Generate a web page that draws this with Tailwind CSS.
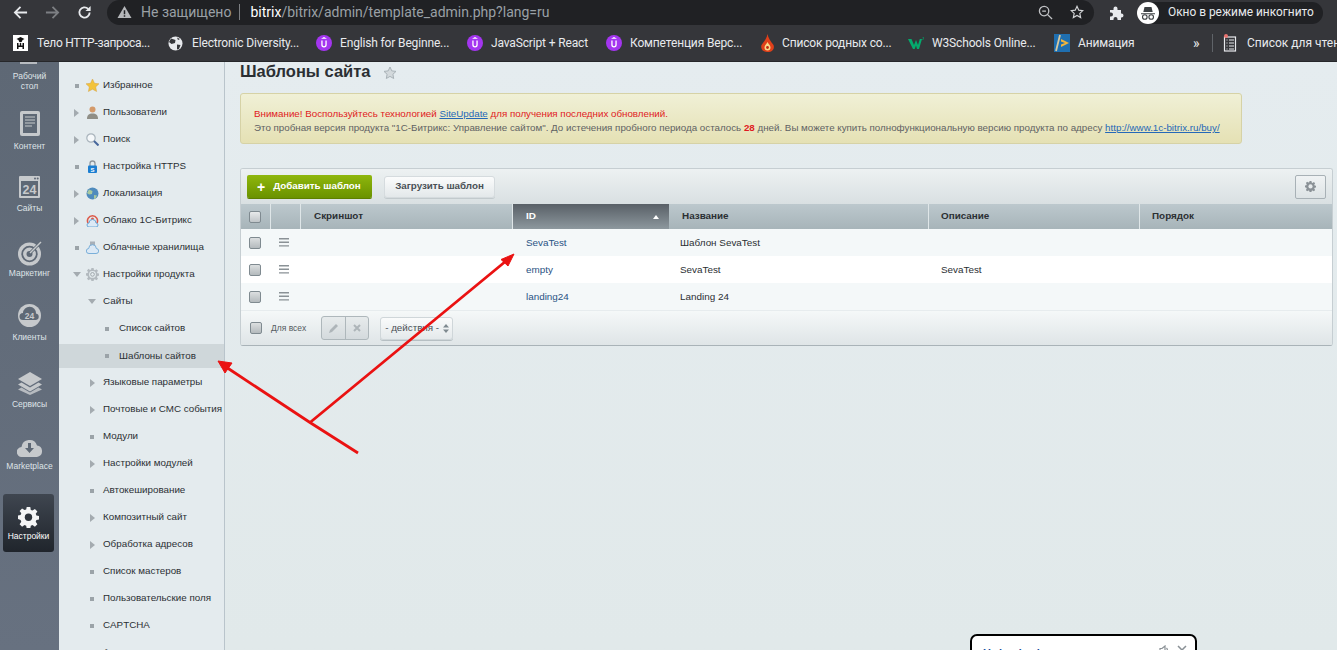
<!DOCTYPE html>
<html lang="ru"><head><meta charset="utf-8"><script src="https://cdn.jsdelivr.net/npm/@tailwindcss/browser@4"></script></head>
<body class="w-[1337px] h-[650px] overflow-hidden relative bg-[#e4ebee] font-['Liberation_Sans',Arial,sans-serif]">
<div class="flex flex-col h-[650px]">
<!-- browser chrome -->
<header class="h-[62px] shrink-0 bg-[#35363a] text-[#e8eaed] font-['Roboto',sans-serif] border-b border-[#26272a]">
  <div class="h-[25px] flex items-center relative">
    <div class="w-[107px] shrink-0 flex items-center pl-[13px] gap-[17px]">
      <svg class="w-[15px] h-[15px]" viewBox="0 0 16 16" fill="none" stroke="#e8eaed" stroke-width="1.9"><path d="M15 8H2M8 2 2 8l6 6"/></svg>
      <svg class="w-[15px] h-[15px]" viewBox="0 0 16 16" fill="none" stroke="#7d7f83" stroke-width="1.9"><path d="M1 8h13M8 2l6 6-6 6"/></svg>
      <svg class="w-[15px] h-[15px]" viewBox="0 0 16 16" fill="none" stroke="#e8eaed" stroke-width="2"><path d="M13.500 8a5.500 5.500 0 1 1-1.600-3.900"/><path d="M14.500 1v5.500H9Z" fill="#e8eaed" stroke="none"/></svg>
    </div>
    <div class="w-[987px] h-[25px] -mt-[1px] rounded-r-[13px] rounded-l-[13px] bg-[#202124] flex items-center pl-[10px] text-[14px]">
      <svg class="w-[15px] h-[14px] shrink-0" viewBox="0 0 16 15"><path d="M8 1 15.500 14H.5Z" fill="#b5b7ba"/><path d="M7.200 5.500h1.600V10H7.200zM7.200 11h1.600v1.500H7.200z" fill="#202124"/></svg>
      <span class="ml-[9px] text-[#9aa0a6] whitespace-nowrap">Не защищено</span>
      <span class="ml-[8px] mr-[10px] w-px h-[16px] bg-[#7d7f83]"></span>
      <span class="text-white">bitrix</span><span class="text-[#9aa0a6]">/bitrix/admin/template_admin.php?lang=ru</span>
      <span class="flex-1"></span>
      <svg class="w-[15px] h-[15px] mr-[17px]" viewBox="0 0 16 16" fill="none" stroke="#c0c2c5" stroke-width="1.400"><circle cx="6.500" cy="6.500" r="5"/><path d="M10 10l5 5M4.500 6.500h4"/></svg>
      <svg class="w-[14px] h-[14px] mr-[10px]" viewBox="0 0 16 16" fill="none" stroke="#d4d6d8" stroke-width="1.300"><path d="M8 1.500l2 4.400 4.700.5-3.500 3.200 1 4.700L8 11.900l-4.200 2.400 1-4.700L1.300 6.400 6 5.900Z"/></svg>
    </div>
    <svg class="w-[16px] h-[16px] ml-[15px]" viewBox="0 0 16 16" fill="#e8eaed"><path d="M1 5h3.500V3.500a2 2 0 0 1 4 0V5H12v3.500h.5a2 2 0 0 1 0 4H12V15H8.500v-1a2 2 0 0 0-4 0v1H1v-3.500h1a2 2 0 0 0 0-4H1Z"/></svg>
    <div class="ml-[12px] h-[22px] w-[186px] bg-[#202124] rounded-full flex items-center text-[11.900px] text-[#e8eaed]">
      <svg class="w-[22px] h-[22px] shrink-0" viewBox="0 0 22 22"><circle cx="11" cy="11" r="11" fill="#fff"/><path d="M4 11.200h14v1H4zM7.500 5h7l1.200 5H6.300Z" fill="#3c4043"/><circle cx="7.800" cy="15" r="2.300" fill="none" stroke="#3c4043" stroke-width="1.100"/><circle cx="14.200" cy="15" r="2.300" fill="none" stroke="#3c4043" stroke-width="1.100"/></svg>
      <span class="ml-[9px] whitespace-nowrap">Окно в режиме инкогнито</span>
    </div>
  </div>
  <div class="h-[36px] flex items-center overflow-hidden text-[12px] tracking-[-0.15px] whitespace-nowrap">
    <div class="flex items-center shrink-0 w-[168px] pl-[13px]">
      <svg class="w-[15px] h-[16px] shrink-0" viewBox="0 0 15 16"><rect width="15" height="16" fill="#fff"/><path d="M3.500 4 7.500 2l4 2-4 2Z" fill="#111"/><circle cx="7.500" cy="5.500" r="1.800" fill="#111"/><path d="M4 8h1.500v6H4zM9.500 8H11v6H9.500zM5.500 10.500h4V12h-4zM6.800 8h1.400v2.500H6.800z" fill="#111"/></svg>
      <span class="ml-[9px] tracking-[-0.3px]">Тело HTTP-запроса...</span>
    </div>
    <div class="flex items-center shrink-0 w-[148px]">
      <svg class="w-[15px] h-[15px] shrink-0" viewBox="0 0 15 15"><circle cx="7.500" cy="7.500" r="7" fill="#e8eaed"/><path d="M3 2.500 7.500 4 7 7 3.500 8 1 6ZM9 8.500l3.500.5-1.500 4-2 .5ZM9 1.500l3 1.500-2 1Z" fill="#35363a"/></svg>
      <span class="ml-[9px]">Electronic Diversity...</span>
    </div>
    <div class="flex items-center shrink-0 w-[151px]">
      <svg class="w-[16px] h-[16px] shrink-0" viewBox="0 0 16 16"><circle cx="8" cy="8" r="8" fill="#a435f0"/><path d="M8 2 11 3.700H5Z" fill="#fff"/><path d="M5.300 5.500h1.300v4.300a1.400 1.400 0 0 0 2.800 0V5.500h1.300v4.300a2.700 2.700 0 0 1-5.400 0Z" fill="#fff"/></svg>
      <span class="ml-[8px]">English for Beginne...</span>
    </div>
    <div class="flex items-center shrink-0 w-[139px]">
      <svg class="w-[16px] h-[16px] shrink-0" viewBox="0 0 16 16"><circle cx="8" cy="8" r="8" fill="#a435f0"/><path d="M8 2 11 3.700H5Z" fill="#fff"/><path d="M5.300 5.500h1.300v4.300a1.400 1.400 0 0 0 2.800 0V5.500h1.300v4.300a2.700 2.700 0 0 1-5.400 0Z" fill="#fff"/></svg>
      <span class="ml-[8px]">JavaScript + React</span>
    </div>
    <div class="flex items-center shrink-0 w-[154px]">
      <svg class="w-[16px] h-[16px] shrink-0" viewBox="0 0 16 16"><circle cx="8" cy="8" r="8" fill="#a435f0"/><path d="M8 2 11 3.700H5Z" fill="#fff"/><path d="M5.300 5.500h1.300v4.300a1.400 1.400 0 0 0 2.800 0V5.500h1.300v4.300a2.700 2.700 0 0 1-5.400 0Z" fill="#fff"/></svg>
      <span class="ml-[8px]">Компетенция Верс...</span>
    </div>
    <div class="flex items-center shrink-0 w-[148px]">
      <svg class="w-[15px] h-[19px] shrink-0" viewBox="0 0 15 19"><path d="M7.500 0c.6 4 3 7 6 11 1.200 3-.5 7-6 7s-7-4-6-7c3-4 5.400-7 6-11Z" fill="#e0401a"/><path d="M7.500 8c1 2 3 3.500 3 5.500a3 3 0 0 1-6 0c0-2 2-3.500 3-5.500Z" fill="#f8d98a"/><circle cx="7.500" cy="13.500" r="1.400" fill="#c12a12"/></svg>
      <span class="ml-[7px]">Список родных со...</span>
    </div>
    <div class="flex items-center shrink-0 w-[146px]">
      <span class="relative w-[16px] h-[12px] shrink-0"><svg class="w-[16px] h-[12px]" viewBox="0 0 16 12"><path d="M0 2h3.500L6 8l2-5 2 5 1.800-6H14l-3 10H9L8 8.500 6.700 12H5Z" fill="#04aa6d"/><path d="M14 0h1.600v.6l-.6.5h.6v1.200H14" fill="none" stroke="#04aa6d" stroke-width=".5"/></svg></span>
      <span class="ml-[8px]">W3Schools Online...</span>
    </div>
    <div class="flex items-center shrink-0 w-[139px]">
      <svg class="w-[16px] h-[18px] shrink-0" viewBox="0 0 16 18"><rect width="16" height="18" fill="#1f6fb0"/><path d="M6 1 2 17" stroke="#d8c9a0" stroke-width="1.800"/><path d="M7 5l8 4-8 4v-2.500L11 9 7 7.500Z" fill="#f1b53c"/></svg>
      <span class="ml-[8px]">Анимация</span>
    </div>
    <span class="text-[14px] shrink-0 w-[19px] tracking-normal">»</span>
    <span class="w-px h-[18px] shrink-0 bg-[#5f6368]"></span>
    <svg class="w-[14px] h-[18px] ml-[10px] shrink-0" viewBox="0 0 14 18" fill="none" stroke="#e8eaed" stroke-width="1.200"><rect x="1.500" y="3" width="11" height="14"/><path d="M3.500 6h1M6 6h5M3.500 9h1M6 9h5M3.500 12h1M6 12h5M3.500 15h1M6 15h5"/><circle cx="3" cy="2" r="2" fill="#e8736f" stroke="none"/></svg>
    <span class="ml-[10px] shrink-0 tracking-normal">Список для чтения</span>
  </div>
</header>
<div class="flex flex-1 min-h-0">
<!-- rail -->
<nav class="w-[59px] shrink-0 overflow-hidden bg-gradient-to-b from-[#5e6875] to-[#677180] text-[#dfe3e7] text-[8.500px] leading-[11px] text-center">
  <div class="h-[33px] pt-[9px] leading-[10px] relative"><span class="absolute left-[20px] top-0 w-[17px] h-[2px] bg-[#b7bbc0]"></span>Рабочий<br>стол</div>
  <div class="h-[66px] pt-[16px] flex flex-col items-center">
    <svg class="w-[20px] h-[25px]" viewBox="0 0 20 25"><rect width="20" height="25" rx="2" fill="#c6c9cc"/><rect x="3" y="3" width="14" height="19" fill="#5e6875"/><path d="M5 6h10M5 9h10M5 12h10M5 15h7" stroke="#c6c9cc" stroke-width="1.200"/></svg>
    <span class="mt-[5px]">Контент</span>
  </div>
  <div class="h-[62px] pt-[15px] flex flex-col items-center">
    <svg class="w-[21px] h-[22px]" viewBox="0 0 21 22"><rect width="21" height="22" rx="1" fill="#c6c9cc"/><rect x="2" y="5" width="17" height="15" fill="#5e6875"/><circle cx="16" cy="2.500" r="1" fill="#5e6875"/><circle cx="18.700" cy="2.500" r="1" fill="#5e6875"/><text x="10.500" y="17.500" text-anchor="middle" font-size="12.500" font-weight="700" fill="#c6c9cc" font-family="Liberation Sans">24</text></svg>
    <span class="mt-[5px]">Сайты</span>
  </div>
  <div class="h-[65px] pt-[17px] flex flex-col items-center">
    <svg class="w-[26px] h-[26px]" viewBox="0 0 26 26" fill="none"><circle cx="12.500" cy="14" r="11.500" fill="#c6c9cc"/><circle cx="12.500" cy="14" r="7.300" stroke="#5e6875" stroke-width="1.800"/><circle cx="12.500" cy="14" r="3" fill="#5e6875"/><path d="M13 13 24 2" stroke="#5e6875" stroke-width="3"/><path d="M13 13 24 2" stroke="#c6c9cc" stroke-width="1.400"/></svg>
    <span class="mt-[2px]">Маркетинг</span>
  </div>
  <div class="h-[64px] pt-[16px] flex flex-col items-center">
    <svg class="w-[23px] h-[23px]" viewBox="0 0 23 23"><circle cx="11.500" cy="11.500" r="11.500" fill="#c6c9cc"/><path d="M5 16a3.500 3.500 0 0 1 0-7 6.500 6.500 0 0 1 13 .5 3.300 3.300 0 0 1 0 6.500Z" fill="#5e6875"/><text x="11.500" y="15" text-anchor="middle" font-size="8.500" font-weight="700" fill="#c6c9cc" font-family="Liberation Sans">24</text></svg>
    <span class="mt-[5px]">Клиенты</span>
  </div>
  <div class="h-[67px] pt-[20px] flex flex-col items-center">
    <svg class="w-[24px] h-[23px]" viewBox="0 0 24 23" fill="#c6c9cc"><path d="M12 0 24 7 12 14 0 7Z"/><path d="M3.500 10.500 12 15.500l8.500-5L24 12.500 12 19.500 0 12.500Z"/><path d="M3.500 15.500 12 20.500l8.500-5L24 17.500 12 23 0 17.500Z" opacity=".85"/></svg>
    <span class="mt-[4px]">Сервисы</span>
  </div>
  <div class="h-[62px] pt-[18px] flex flex-col items-center">
    <svg class="w-[25px] h-[20px]" viewBox="0 0 25 20"><path d="M5 20a5 5 0 0 1-.5-10A8 8 0 0 1 20 8.500 5.800 5.800 0 0 1 20 20Z" fill="#c6c9cc"/><path d="M11 6h3v5h3l-4.500 5L8 11h3Z" fill="#5e6875"/></svg>
    <span class="mt-[4px]">Marketplace</span>
  </div>
  <div class="mx-[3px] mt-[13px] h-[58px] w-[51px] rounded-[3px] bg-gradient-to-b from-[#3f4650] to-[#20252c] text-white flex flex-col items-center pt-[13px]">
    <svg class="w-[21px] h-[21px]" viewBox="0 0 21 21"><path fill="#f4f5f6" d="M8.700 0h3.600l.5 2.900 1.700.7 2.400-1.700 2.500 2.500-1.700 2.400.7 1.700 2.600.5v3.600l-2.600.5-.7 1.700 1.700 2.400-2.500 2.500-2.400-1.700-1.700.7-.5 2.800H8.700l-.5-2.800-1.700-.7-2.400 1.700-2.500-2.500 1.700-2.400-.7-1.700L0 12.100V8.500l2.600-.5.7-1.700L1.600 3.900 4.100 1.400l2.400 1.700 1.700-.7Z"/><circle cx="10.500" cy="10.300" r="3.700" fill="#2e343c"/></svg>
    <span class="mt-[3px]">Настройки</span>
  </div>
</nav>
<!-- menu -->
<aside class="w-[166px] shrink-0 overflow-hidden border-r border-[#b9c4cb] bg-[#e4ebee] text-[9.800px] text-[#2b2f33] pt-[10px]">
  <div class="h-[27px] flex items-center"><span class="w-[4px] h-[4px] bg-[#9ba3a8] ml-[16px] mr-[7px]"></span><svg class="w-[13px] h-[13px] mr-[4px]" viewBox="0 0 13 13"><path d="M6.500 0 8.500 4.300l4.500.5-3.300 3.100.9 4.600-4.100-2.300-4.100 2.300.9-4.600L0 4.800l4.500-.5Z" fill="#f3c33b" stroke="#d5a347" stroke-width=".5"/></svg>Избранное</div>
  <div class="h-[27px] flex items-center"><span class="w-0 h-0 border-y-[4px] border-y-transparent border-l-[5px] border-l-[#a4abb0] ml-[15px] mr-[7px]"></span><svg class="w-[13px] h-[13px] mr-[4px]" viewBox="0 0 13 13"><circle cx="6.500" cy="3.500" r="3" fill="#d49a6a"/><path d="M1 13c0-4 2-5.500 5.500-5.500S12 9 12 13Z" fill="#8f8e86"/></svg>Пользователи</div>
  <div class="h-[27px] flex items-center"><span class="w-0 h-0 border-y-[4px] border-y-transparent border-l-[5px] border-l-[#a4abb0] ml-[15px] mr-[7px]"></span><svg class="w-[13px] h-[13px] mr-[4px]" viewBox="0 0 13 13"><circle cx="5" cy="5" r="4.200" fill="#f5f8fa" stroke="#a9b4bc" stroke-width="1.200"/><path d="M8 8l4.500 4.500" stroke="#47679c" stroke-width="2"/></svg>Поиск</div>
  <div class="h-[27px] flex items-center"><span class="w-[4px] h-[4px] bg-[#9ba3a8] ml-[16px] mr-[7px]"></span><svg class="w-[13px] h-[13px] mr-[4px]" viewBox="0 0 13 13"><path d="M4 6V3.500a2.500 2.500 0 0 1 5 0V6" fill="none" stroke="#8f979d" stroke-width="1.300"/><rect x="2" y="5.500" width="9" height="7.500" rx="1" fill="#1b7ed1"/><text x="6.500" y="11.500" text-anchor="middle" font-size="6" font-weight="700" fill="#fff" font-family="Liberation Sans">S</text></svg>Настройка HTTPS</div>
  <div class="h-[27px] flex items-center"><span class="w-0 h-0 border-y-[4px] border-y-transparent border-l-[5px] border-l-[#a4abb0] ml-[15px] mr-[7px]"></span><svg class="w-[13px] h-[13px] mr-[4px]" viewBox="0 0 13 13"><circle cx="6.500" cy="6.500" r="6" fill="#4f8bbd"/><path d="M3 2.500 6.500 4 6 7 3 7.500 1 6ZM8 8l3 .5-1.500 3-1.500.5Z" fill="#a9c99f"/></svg>Локализация</div>
  <div class="h-[27px] flex items-center"><span class="w-0 h-0 border-y-[4px] border-y-transparent border-l-[5px] border-l-[#a4abb0] ml-[15px] mr-[7px]"></span><svg class="w-[13px] h-[13px] mr-[4px]" viewBox="0 0 13 13"><path d="M2 9a5 5 0 1 1 9 0" fill="none" stroke="#dc5a4a" stroke-width="1.600"/><circle cx="6.500" cy="5" r="1.500" fill="#dc5a4a"/><path d="M3 13a2 2 0 0 1 0-4 3.500 3.500 0 0 1 7 0 2 2 0 0 1 0 4Z" fill="#dce9f5" stroke="#5f9fd3" stroke-width=".9"/></svg>Облако 1С-Битрикс</div>
  <div class="h-[27px] flex items-center"><span class="w-[4px] h-[4px] bg-[#9ba3a8] ml-[16px] mr-[7px]"></span><svg class="w-[13px] h-[13px] mr-[4px]" viewBox="0 0 13 13"><rect x="4" y="0.500" width="5" height="6" fill="#a8b0b8"/><path d="M3 12.500a2.500 2.500 0 0 1-.3-5 3.800 3.800 0 0 1 7.600 0 2.500 2.500 0 0 1-.3 5Z" fill="#dce9f5" stroke="#6ea8d6" stroke-width=".9"/></svg>Облачные хранилища</div>
  <div class="h-[27px] flex items-center"><span class="w-0 h-0 border-x-[4px] border-x-transparent border-t-[5px] border-t-[#a4abb0] ml-[14px] mr-[5px]"></span><svg class="w-[13px] h-[13px] mr-[4px]" viewBox="0 0 21 21"><path fill="#b3babf" d="M8.700 0h3.600l.5 2.900 1.700.7 2.400-1.700 2.500 2.500-1.700 2.400.7 1.700 2.600.5v3.600l-2.600.5-.7 1.700 1.700 2.400-2.500 2.500-2.400-1.700-1.700.7-.5 2.800H8.700l-.5-2.800-1.700-.7-2.400 1.700-2.500-2.500 1.700-2.400-.7-1.700L0 12.100V8.500l2.600-.5.7-1.700L1.600 3.900 4.100 1.400l2.400 1.700 1.700-.7Z"/><circle cx="10.500" cy="10.300" r="5.500" fill="#e4ebee"/><circle cx="10.500" cy="10.300" r="3" fill="none" stroke="#9ba3a8" stroke-width="1.500"/></svg>Настройки продукта</div>
  <div class="h-[27px] flex items-center"><span class="w-0 h-0 border-x-[4px] border-x-transparent border-t-[5px] border-t-[#a4abb0] ml-[29px] mr-[7px]"></span>Сайты</div>
  <div class="h-[27px] flex items-center"><span class="w-[4px] h-[4px] bg-[#9ba3a8] ml-[46px] mr-[10px]"></span>Список сайтов</div>
  <div class="h-[24px] mt-[2px] mb-[1px] flex items-center bg-[#cfd7da]"><span class="w-[4px] h-[4px] bg-[#9ba3a8] ml-[46px] mr-[10px]"></span>Шаблоны сайтов</div>
  <div class="h-[27px] flex items-center"><span class="w-0 h-0 border-y-[4px] border-y-transparent border-l-[5px] border-l-[#a4abb0] ml-[31px] mr-[8px]"></span>Языковые параметры</div>
  <div class="h-[27px] flex items-center whitespace-nowrap"><span class="w-0 h-0 border-y-[4px] border-y-transparent border-l-[5px] border-l-[#a4abb0] ml-[31px] mr-[8px]"></span>Почтовые и СМС события</div>
  <div class="h-[27px] flex items-center"><span class="w-[4px] h-[4px] bg-[#9ba3a8] ml-[31px] mr-[9px]"></span>Модули</div>
  <div class="h-[27px] flex items-center"><span class="w-0 h-0 border-y-[4px] border-y-transparent border-l-[5px] border-l-[#a4abb0] ml-[31px] mr-[8px]"></span>Настройки модулей</div>
  <div class="h-[27px] flex items-center"><span class="w-[4px] h-[4px] bg-[#9ba3a8] ml-[31px] mr-[9px]"></span>Автокеширование</div>
  <div class="h-[27px] flex items-center"><span class="w-0 h-0 border-y-[4px] border-y-transparent border-l-[5px] border-l-[#a4abb0] ml-[31px] mr-[8px]"></span>Композитный сайт</div>
  <div class="h-[27px] flex items-center"><span class="w-0 h-0 border-y-[4px] border-y-transparent border-l-[5px] border-l-[#a4abb0] ml-[31px] mr-[8px]"></span>Обработка адресов</div>
  <div class="h-[27px] flex items-center"><span class="w-[4px] h-[4px] bg-[#9ba3a8] ml-[31px] mr-[9px]"></span>Список мастеров</div>
  <div class="h-[27px] flex items-center"><span class="w-[4px] h-[4px] bg-[#9ba3a8] ml-[31px] mr-[9px]"></span>Пользовательские поля</div>
  <div class="h-[27px] flex items-center"><span class="w-[4px] h-[4px] bg-[#9ba3a8] ml-[31px] mr-[9px]"></span>CAPTCHA</div>
  <div class="h-[27px] flex items-center"><span class="w-[4px] h-[4px] bg-[#9ba3a8] ml-[31px] mr-[9px]"></span>Агенты</div>
</aside>
<!-- main -->
<main class="flex-1 min-w-0 pl-[15px] pr-[4px] bg-gradient-to-b from-[#e5ecef] to-[#e1e9ea]">
  <div class="h-[31px] flex items-start">
    <h1 class="text-[16.500px] leading-[19px] font-bold text-[#2b2f33]">Шаблоны сайта</h1>
    <svg class="w-[14px] h-[14px] ml-[13px] mt-[4px]" viewBox="0 0 14 14"><path d="M7 1l1.800 3.900 4.200.5-3.100 2.900.8 4.200L7 10.400l-3.700 2.100.8-4.200L1 5.400l4.200-.5Z" fill="#d3d9dc" stroke="#a9b2b7"/></svg>
  </div>
  <div class="w-[1002px] h-[51px] rounded-[3px] border border-[#d6d2a6] bg-gradient-to-b from-[#f0f0d6] to-[#e5e1b4] pl-[13px] pt-[13px] text-[9.780px] leading-[14px] text-[#5f6264] whitespace-nowrap">
    <div class="text-[#e01a22]">Внимание! Воспользуйтесь технологией <span class="text-[#2568b8] underline">SiteUpdate</span> для получения последних обновлений.</div>
    <div>Это пробная версия продукта "1С-Битрикс: Управление сайтом". До истечения пробного периода осталось <b class="text-[#e01a22]">28</b> дней. Вы можете купить полнофункциональную версию продукта по адресу <span class="text-[#2568b8] underline">http://www.1c-bitrix.ru/buy/</span></div>
  </div>
  <div class="mt-[24px] w-[1093px] rounded-[3px] border border-[#c6ced2] border-b-[#a9b3b8] bg-[#f5f9f9] text-[9.900px] text-[#2b2f33] overflow-hidden">
    <div class="h-[35px] bg-gradient-to-b from-[#edf1f2] to-[#d9e0e2] flex items-center pl-[6px] pr-[6px]">
      <div class="h-[23px] w-[125px] rounded-[2px] bg-gradient-to-b from-[#8fb70d] to-[#6a9200] text-white font-bold flex items-center pl-[10px] text-[9.800px] shadow-[0_1px_0_#5d7f00]"><span class="text-[14px] leading-none mr-[8px]">+</span>Добавить шаблон</div>
      <div class="ml-[12px] h-[22px] w-[111px] rounded-[3px] bg-gradient-to-b from-[#fbfcfc] to-[#e3e8ea] border border-[#d5dbde] flex items-center justify-center font-bold text-[#4a5055] text-[9.800px] shadow-[0_1px_0_#c2cacd]">Загрузить шаблон</div>
      <div class="flex-1"></div>
      <div class="h-[24px] w-[31px] rounded-[2px] border border-[#a8b1b6] bg-gradient-to-b from-[#f0f3f4] to-[#dde3e5] flex items-center justify-center">
        <svg class="w-[11px] h-[11px]" viewBox="0 0 21 21"><path fill="#8a9196" d="M8.700 0h3.600l.5 2.900 1.700.7 2.400-1.700 2.500 2.500-1.700 2.400.7 1.700 2.600.5v3.600l-2.600.5-.7 1.700 1.700 2.400-2.500 2.500-2.400-1.700-1.700.7-.5 2.800H8.700l-.5-2.800-1.700-.7-2.400 1.700-2.500-2.500 1.700-2.400-.7-1.700L0 12.100V8.500l2.600-.5.7-1.700L1.600 3.900 4.100 1.400l2.400 1.700 1.700-.7Z"/><circle cx="10.500" cy="10.300" r="4" fill="#e6eaec"/></svg>
      </div>
    </div>
    <div class="grid grid-cols-[30px_30px_211px_157px_260px_211px_1fr] h-[25px] bg-gradient-to-b from-[#bcc8cd] to-[#a7b4b9] font-bold text-[#2b2f33] items-stretch">
      <div class="flex items-center pl-[8px] border-r border-[#dfe6e8]"><span class="w-[12px] h-[12px] rounded-[2px] bg-gradient-to-b from-[#e8eaeb] to-[#c0c5c8] border border-[#7f8a90]"></span></div>
      <div class="border-r border-[#dfe6e8]"></div>
      <div class="flex items-center pl-[13px]">Скриншот</div>
      <div class="flex items-center pl-[13px] pr-[10px] justify-between bg-gradient-to-b from-[#596067] to-[#8d989e] text-white border-l border-[#dfe6e8]">ID<span class="w-0 h-0 border-x-[3px] border-x-transparent border-b-[4px] border-b-white"></span></div>
      <div class="flex items-center pl-[13px] border-r border-[#dfe6e8]">Название</div>
      <div class="flex items-center pl-[12px] border-r border-[#dfe6e8]">Описание</div>
      <div class="flex items-center pl-[12px]">Порядок</div>
    </div>
    <div class="grid grid-cols-[30px_30px_211px_157px_260px_211px_1fr] h-[27px] items-center bg-[#f4f8f9]">
      <span class="ml-[8px] w-[12px] h-[12px] rounded-[2px] bg-gradient-to-b from-[#dcdfe0] to-[#b4babd] border border-[#7f8a90]"></span>
      <svg class="ml-[8px] w-[10px] h-[9px]" viewBox="0 0 10 9" fill="#8a9196"><path d="M0 0h10v1.400H0zM0 3.600h10V5H0zM0 7.200h10v1.400H0z"/></svg>
      <span></span><span class="pl-[14px] pt-[2px] text-[#2a5384]">SevaTest</span><span class="pl-[11px] pt-[2px]">Шаблон SevaTest</span><span></span><span></span>
    </div>
    <div class="grid grid-cols-[30px_30px_211px_157px_260px_211px_1fr] h-[27px] items-center bg-white">
      <span class="ml-[8px] w-[12px] h-[12px] rounded-[2px] bg-gradient-to-b from-[#dcdfe0] to-[#b4babd] border border-[#7f8a90]"></span>
      <svg class="ml-[8px] w-[10px] h-[9px]" viewBox="0 0 10 9" fill="#8a9196"><path d="M0 0h10v1.400H0zM0 3.600h10V5H0zM0 7.200h10v1.400H0z"/></svg>
      <span></span><span class="pl-[14px] pt-[2px] text-[#2a5384]">empty</span><span class="pl-[11px] pt-[2px]">SevaTest</span><span class="pl-[12px] pt-[2px]">SevaTest</span><span></span>
    </div>
    <div class="grid grid-cols-[30px_30px_211px_157px_260px_211px_1fr] h-[27px] items-center bg-[#f4f8f9]">
      <span class="ml-[8px] w-[12px] h-[12px] rounded-[2px] bg-gradient-to-b from-[#dcdfe0] to-[#b4babd] border border-[#7f8a90]"></span>
      <svg class="ml-[8px] w-[10px] h-[9px]" viewBox="0 0 10 9" fill="#8a9196"><path d="M0 0h10v1.400H0zM0 3.600h10V5H0zM0 7.200h10v1.400H0z"/></svg>
      <span></span><span class="pl-[14px] pt-[2px] text-[#2a5384]">landing24</span><span class="pl-[11px] pt-[2px]">Landing 24</span><span></span><span></span>
    </div>
    <div class="h-[35px] bg-gradient-to-b from-[#f5f8f8] to-[#dfe5e7] flex items-center pl-[9px] text-[8.500px] text-[#555b60] border-t border-[#e7ecee]">
      <span class="w-[12px] h-[12px] rounded-[2px] bg-gradient-to-b from-[#dcdfe0] to-[#b4babd] border border-[#7f8a90]"></span>
      <span class="ml-[9px]">Для всех</span>
      <div class="ml-[15px] w-[48px] h-[24px] rounded-[3px] border border-[#aeb7bb] bg-gradient-to-b from-[#e7ebec] to-[#d4dadd] flex">
        <div class="w-[24px] border-r border-[#aeb7bb] flex items-center justify-center"><svg class="w-[10px] h-[10px]" viewBox="0 0 10 10"><path d="M0 10l1-3 6-6 2 2-6 6Z" fill="#aeb5b9"/></svg></div>
        <div class="flex-1 flex items-center justify-center"><svg class="w-[8px] h-[8px]" viewBox="0 0 8 8" stroke="#aeb5b9" stroke-width="2"><path d="M1 1l6 6M7 1 1 7"/></svg></div>
      </div>
      <div class="ml-[11px] w-[73px] h-[23px] rounded-[3px] border border-[#cfd6d9] bg-gradient-to-b from-[#fafbfb] to-[#e4e9eb] flex items-center pl-[4px] text-[9.800px] text-[#4a5055] shadow-[0_1px_0_#b6bfc3]">- действия -<svg class="w-[6px] h-[9px] ml-[4px]" viewBox="0 0 6 9" fill="#7f8a90"><path d="M3 0l3 3.500H0zM3 9 0 5.500h6z"/></svg></div>
    </div>
  </div>
</main>
</div>
</div>
<!-- drawn arrows (annotation over the page) -->
<svg class="absolute left-0 top-0 w-[1337px] h-[650px] pointer-events-none" viewBox="0 0 1337 650" fill="none">
  <path d="M358 453 310 422.500 226 367M310 422.500 506 261" stroke="#ea1212" stroke-width="2.800"/>
  <path d="M514 254 501 259.500 508 266Z" fill="#ea1212" stroke="#ea1212"/>
  <path d="M218 361 232 363 225 373Z" fill="#ea1212" stroke="#ea1212"/>
</svg>
<!-- floating widget cut by the window edge -->
<div class="absolute left-[970px] top-[634px] w-[227px] h-[30px] rounded-[7px] border-2 border-black bg-white flex items-start justify-between pt-[9px] pl-[11px] pr-[8px] text-[11px] text-[#1a4fa0] font-bold tracking-[1px]">
  <span>Help desk</span>
  <span class="flex gap-[8px] items-start"><svg class="w-[10px] h-[10px]" viewBox="0 0 10 10" fill="none" stroke="#8a9196" stroke-width="1.200"><path d="M1 3.500h2L6 1v8L3 6.500H1ZM7.500 3a3 3 0 0 1 0 4"/></svg><svg class="w-[10px] h-[10px]" viewBox="0 0 10 10" stroke="#8a9196" stroke-width="1.500"><path d="M1 1l8 8M9 1 1 9"/></svg></span>
</div>
</body></html>
